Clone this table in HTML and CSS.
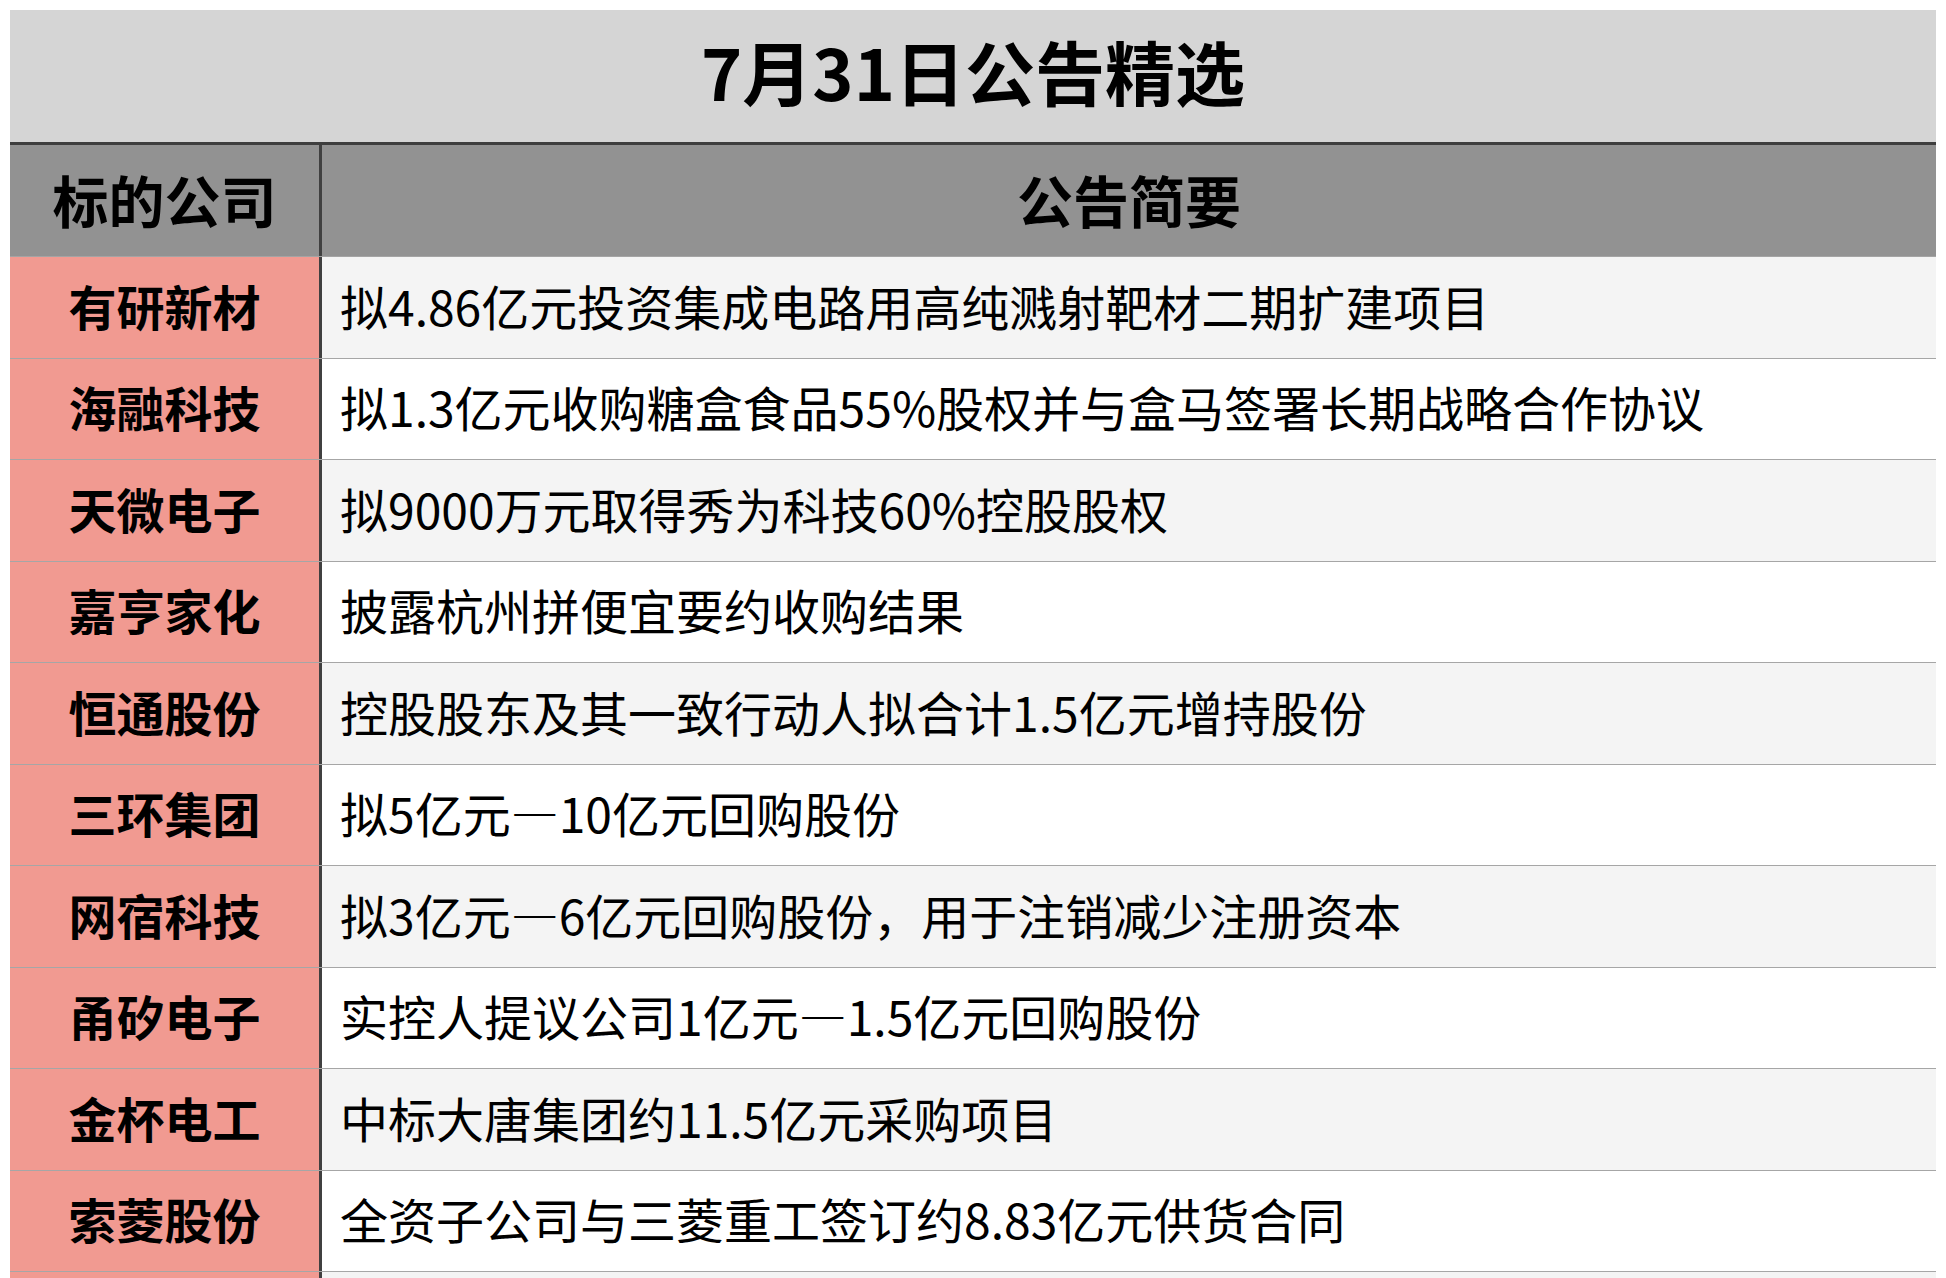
FILE: index.html
```html
<!DOCTYPE html>
<html lang="zh-CN">
<head>
<meta charset="utf-8">
<title>7月31日公告精选</title>
<link rel="stylesheet" href="styles.css">
</head>
<body>
<div class="sheet">
  <div class="title-band"><h1 class="title">7月31日公告精选</h1></div>
  <div class="head-row">
    <div class="cell-name">标的公司</div>
    <div class="cell-desc">公告简要</div>
  </div>
  <div class="row odd"><div class="cell-name">有研新材</div><div class="cell-desc">拟4.86亿元投资集成电路用高纯溅射靶材二期扩建项目</div></div>
  <div class="row even"><div class="cell-name">海融科技</div><div class="cell-desc">拟1.3亿元收购糖盒食品55%股权并与盒马签署长期战略合作协议</div></div>
  <div class="row odd"><div class="cell-name">天微电子</div><div class="cell-desc">拟9000万元取得秀为科技60%控股股权</div></div>
  <div class="row even"><div class="cell-name">嘉亨家化</div><div class="cell-desc">披露杭州拼便宜要约收购结果</div></div>
  <div class="row odd"><div class="cell-name">恒通股份</div><div class="cell-desc">控股股东及其一致行动人拟合计1.5亿元增持股份</div></div>
  <div class="row even"><div class="cell-name">三环集团</div><div class="cell-desc">拟5亿元—10亿元回购股份</div></div>
  <div class="row odd"><div class="cell-name">网宿科技</div><div class="cell-desc">拟3亿元—6亿元回购股份，用于注销减少注册资本</div></div>
  <div class="row even"><div class="cell-name">甬矽电子</div><div class="cell-desc">实控人提议公司1亿元—1.5亿元回购股份</div></div>
  <div class="row odd"><div class="cell-name">金杯电工</div><div class="cell-desc">中标大唐集团约11.5亿元采购项目</div></div>
  <div class="row even"><div class="cell-name">索菱股份</div><div class="cell-desc">全资子公司与三菱重工签订约8.83亿元供货合同</div></div>
  <div class="row odd"><div class="cell-name"></div><div class="cell-desc"></div></div>
</div>
</body>
</html>
```
FILE: styles.css
```css
html, body {
  margin: 0;
  padding: 0;
  background: #ffffff;
}
body {
  font-family: "Noto Sans CJK SC", "Noto Sans", sans-serif;
  color: #000;
}
.sheet {
  width: 1926px;
  padding: 10px 0 0 10px;
}
.title-band {
  height: 132px;
  box-sizing: border-box;
  padding-bottom: 10px;
  background: #d5d5d5;
  border-bottom: 3px solid #3e3e3e;
  display: flex;
  align-items: center;
  justify-content: center;
}
.title-band { height: 135px; }
.title {
  margin: 0;
  font-size: 70px;
  font-weight: 700;
  line-height: 1;
}
.head-row {
  display: flex;
  height: 112px;
  box-sizing: border-box;
  background: #929292;
  border-bottom: 1px solid #a4a4a4;
}
.head-row .cell-name,
.head-row .cell-desc {
  font-size: 56px;
  font-weight: 700;
  justify-content: center;
  padding-bottom: 5px;
  box-sizing: border-box;
}
.row {
  display: flex;
  height: 101.5px;
  box-sizing: border-box;
  border-bottom: 1px solid #a6a6a6;
}
.row.odd { background: #f4f4f4; }
.row.even { background: #ffffff; }
.cell-name {
  width: 312px;
  flex: none;
  box-sizing: border-box;
  border-right: 3px solid #404040;
  display: flex;
  align-items: center;
  justify-content: center;
}
.row .cell-name {
  background: #f19a91;
  font-size: 48px;
  font-weight: 700;
  padding-bottom: 5px;
}
.cell-desc {
  flex: 1;
  display: flex;
  align-items: center;
  white-space: nowrap;
}
.row .cell-desc {
  padding-left: 18px;
  padding-bottom: 5px;
  font-size: 48px;
  font-weight: 400;
}
```
